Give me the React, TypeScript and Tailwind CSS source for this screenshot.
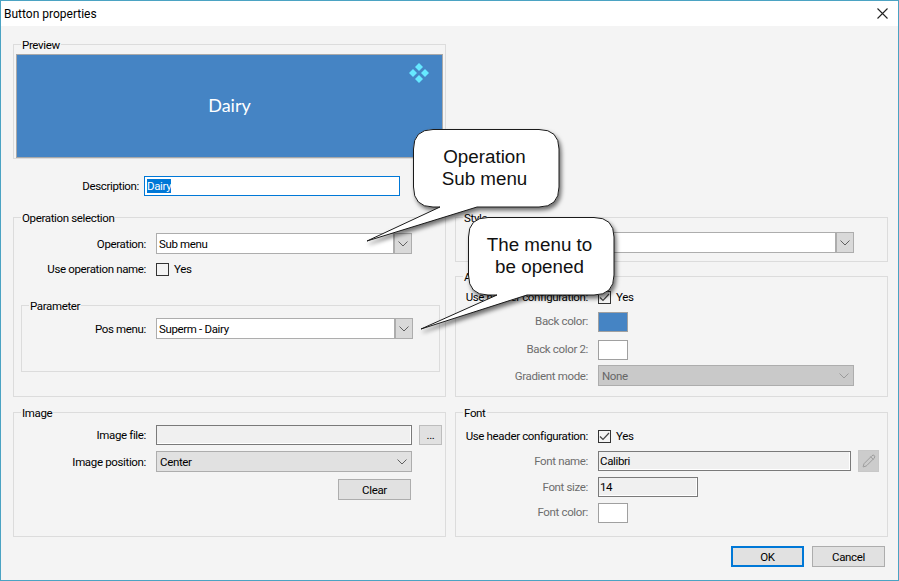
import { ReactNode } from 'react'
import { Pencil } from 'lucide-react'

const uiFont = "font-['Roboto',sans-serif]"

function Chevron({ color = '#606060' }: { color?: string }) {
  return (
    <svg width="10" height="6" viewBox="0 0 10 6" fill="none">
      <path d="M0.5 0.5 L5 5 L9.5 0.5" stroke={color} strokeWidth="1" />
    </svg>
  )
}

function Group({ title, className, children }: { title: string; className: string; children?: ReactNode }) {
  return (
    <div className={`relative border border-[#dcdcdc] ${className}`}>
      <span className="absolute left-[7px] top-[-7px] bg-[#f4f4f4] px-[1px] leading-[14px]">{title}</span>
      {children}
    </div>
  )
}

function Row({ label, labelWidth, muted, raised, className, children }: { label: string; labelWidth: string; muted?: boolean; raised?: boolean; className: string; children: ReactNode }) {
  return (
    <div className={`flex items-center ${className}`}>
      <span className={`${labelWidth} shrink-0 whitespace-nowrap text-right leading-[14px] ${muted ? 'text-[#6d6d6d]' : ''} ${raised ? 'mb-[3px]' : ''}`}>{label}</span>
      {children}
    </div>
  )
}

function Combo({ value, className }: { value: string; className: string }) {
  return (
    <div className={`flex h-[21px] items-center border border-[#adadad] bg-white pl-[2px] ${className}`}>
      <span className="flex-1 leading-[14px]">{value}</span>
      <span className="flex h-full w-[18px] items-center justify-center border-l-2 border-[#adadad] bg-[#d9d9d9]">
        <Chevron />
      </span>
    </div>
  )
}

function FlatCombo({ value, disabled, className }: { value: string; disabled?: boolean; className: string }) {
  return (
    <div className={`flex h-[21px] items-center justify-between border border-[#adadad] pl-[3px] pr-[4px] ${disabled ? 'bg-[#c9c9c9] text-[#666666]' : 'bg-[#e1e1e1]'} ${className}`}>
      <span className="leading-[14px]">{value}</span>
      <Chevron color={disabled ? '#9a9a9a' : '#606060'} />
    </div>
  )
}

function Check({ checked, label }: { checked: boolean; label: string }) {
  return (
    <div className="flex items-center">
      <span className="flex h-[13px] w-[13px] items-center justify-center border border-[#333333] bg-[#f4f4f4]">
        {checked && (
          <svg width="11" height="9" viewBox="0 0 11 9" fill="none">
            <path d="M1 4.5 L4 7.5 L10 1" stroke="#444444" strokeWidth="1.2" />
          </svg>
        )}
      </span>
      <span className="ml-[5px] leading-[14px]">{label}</span>
    </div>
  )
}

function Swatch({ color }: { color: string }) {
  return <span className={`block h-[20px] w-[30px] border border-[#a0a0a0] ${color}`} />
}

function ReadonlyInput({ value, className }: { value?: string; className: string }) {
  return (
    <div className={`flex h-[20px] items-center border border-[#7a7a7a] bg-[#f0f0f0] pl-[1px] shadow-[inset_0_-1px_0_#ffffff,inset_-1px_0_0_#ffffff] ${className}`}>
      <span className="leading-[14px]">{value}</span>
    </div>
  )
}

function Btn({ label, className }: { label: string; className: string }) {
  return <div className={`flex items-center justify-center border-2 bg-[#e1e1e1] leading-[14px] ${className}`}>{label}</div>
}

function Callout({ box, path, lines, text }: { box: string; path: string; lines: string[]; text: string }) {
  return (
    <div className={`absolute tracking-normal ${box}`}>
      <svg width="240" height="130" viewBox="0 0 240 130" className="absolute left-0 top-0 overflow-visible">
        <path d={path} fill="#ffffff" stroke="#1a1a1a" strokeWidth="1" style={{ filter: 'drop-shadow(2px 3px 2px rgba(0,0,0,0.55))' }} />
      </svg>
      <div className={`absolute ${text} font-['Liberation_Sans',sans-serif] text-[18.8px] leading-[22px] text-center text-[#111111]`}>
        {lines.map((l) => (
          <div key={l}>{l}</div>
        ))}
      </div>
    </div>
  )
}

export default function App() {
  return (
    <div className={`relative flex h-[581px] w-[899px] flex-col overflow-hidden border border-[#4ba3c3] bg-[#f4f4f4] text-[11.5px] tracking-[-0.35px] text-black ${uiFont}`}>
      {/* Title bar */}
      <div className="flex h-[25px] shrink-0 items-center justify-between bg-white pl-[3px] pr-[10px]">
        <span className="text-[12px] leading-[14px] tracking-normal">Button properties</span>
        <svg width="11" height="11" viewBox="0 0 11 11" fill="none">
          <path d="M0.5 0.5 L10.5 10.5 M10.5 0.5 L0.5 10.5" stroke="#222222" strokeWidth="1.1" />
        </svg>
      </div>

      <div className="flex gap-x-[9px] pl-[12px]">
        {/* Left column */}
        <div className="flex w-[433px] flex-col">
          <Group title="Preview" className="mt-[18px] h-[115px] px-[2px] pt-[9px]">
            <div className="relative flex h-[104px] items-center justify-center border border-[#a9a9a9] bg-[#4584c4] pb-[2px] font-['Lato',sans-serif] text-[18px] tracking-normal text-white">
              Dairy
              <svg width="20" height="20" viewBox="0 0 20 20" className="absolute right-[13px] top-[8px]" fill="#66e8ff">
                <path d="M10 0 L14 4 L10 8 L6 4 Z" />
                <path d="M4 6 L8 10 L4 14 L0 10 Z" />
                <path d="M16 6 L20 10 L16 14 L12 10 Z" />
                <path d="M10 12 L14 16 L10 20 L6 16 Z" />
              </svg>
            </div>
          </Group>

          <Row label="Description:" labelWidth="w-[126px]" className="mt-[17px] h-[20px]">
            <div className="ml-[5px] flex h-[20px] w-[256px] items-center border border-[#0078d7] bg-white pl-[2px]">
              <span className="bg-[#0078d7] leading-[14px] text-white">Dairy</span>
            </div>
          </Row>

          <Group title="Operation selection" className="mt-[21px] h-[180px] pt-[15px]">
            <Row label="Operation:" labelWidth="w-[132px]" className="">
              <Combo value="Sub menu" className="ml-[10px] w-[256px]" />
            </Row>
            <Row label="Use operation name:" labelWidth="w-[132px]" className="mt-[8px]">
              <div className="ml-[10px]">
                <Check checked={false} label="Yes" />
              </div>
            </Row>
            <Group title="Parameter" className="ml-[7px] mt-[29px] h-[67px] w-[419px] pt-[12px]">
              <Row label="Pos menu:" labelWidth="w-[124px]" className="">
                <Combo value="Superm - Dairy" className="ml-[10px] w-[257px]" />
              </Row>
            </Group>
          </Group>

          <Group title="Image" className="mt-[15px] h-[125px] pt-[12px]">
            <Row label="Image file:" labelWidth="w-[132px]" className="">
              <ReadonlyInput className="ml-[10px] w-[256px]" />
              <Btn label="..." className="ml-[7px] h-[20px] w-[23px] border-[#bdbdbd] !border" />
            </Row>
            <Row label="Image position:" labelWidth="w-[132px]" className="mt-[6px]">
              <FlatCombo value="Center" className="ml-[10px] w-[256px]" />
            </Row>
            <div className="mt-[7px] flex justify-end pr-[34px]">
              <Btn label="Clear" className="h-[21px] w-[73px] !border border-[#adadad]" />
            </div>
          </Group>
        </div>

        {/* Right column */}
        <div className="flex w-[433px] flex-col">
          <Group title="Style" className="mt-[191px] h-[45px] pt-[14px]">
            <div className="pl-[142px]">
              <Combo value="" className="w-[256px]" />
            </div>
          </Group>

          <Group title="Appearance" className="mt-[14px] h-[121px] pt-[13px]">
            <Row label="Use header configuration:" labelWidth="w-[132px]" className="">
              <div className="ml-[10px]">
                <Check checked label="Yes" />
              </div>
            </Row>
            <Row label="Back color:" labelWidth="w-[132px]" muted raised className="mt-[8px]">
              <span className="ml-[10px]">
                <Swatch color="bg-[#4584c4]" />
              </span>
            </Row>
            <Row label="Back color 2:" labelWidth="w-[132px]" muted raised className="mt-[8px]">
              <span className="ml-[10px]">
                <Swatch color="bg-white" />
              </span>
            </Row>
            <Row label="Gradient mode:" labelWidth="w-[132px]" muted className="mt-[5px]">
              <FlatCombo value="None" disabled className="ml-[10px] w-[256px]" />
            </Row>
          </Group>

          <Group title="Font" className="mt-[15px] h-[125px] pt-[16px]">
            <Row label="Use header configuration:" labelWidth="w-[132px]" className="">
              <div className="ml-[10px]">
                <Check checked label="Yes" />
              </div>
            </Row>
            <Row label="Font name:" labelWidth="w-[132px]" muted className="mt-[7px]">
              <ReadonlyInput value="Calibri" className="ml-[10px] w-[253px]" />
              <div className="ml-[7px] flex h-[22px] w-[21px] items-center justify-center border border-[#c8c8c8] bg-[#cccccc]">
                <Pencil size={14} strokeWidth={1.25} color="#8a8a8a" />
              </div>
            </Row>
            <Row label="Font size:" labelWidth="w-[132px]" muted className="mt-[5px]">
              <ReadonlyInput value="14" className="ml-[10px] w-[100px]" />
            </Row>
            <Row label="Font color:" labelWidth="w-[132px]" muted raised className="mt-[6px]">
              <span className="ml-[10px]">
                <Swatch color="bg-white" />
              </span>
            </Row>
          </Group>
        </div>
      </div>

      {/* Footer buttons */}
      <div className="mt-[9px] flex justify-end gap-x-[8px] pr-[13px]">
        <Btn label="OK" className="h-[21px] w-[73px] border-[#0078d7]" />
        <Btn label="Cancel" className="h-[21px] w-[73px] !border border-[#adadad]" />
      </div>

      {/* Callouts */}
      <Callout
        box="left-[412px] top-[128px] h-[130px] w-[240px]"
        path="M20 0.5 H126 Q146 0.5 146 20 V58 Q146 78 126 78 H64 L-46 112 L27 78 H20 Q0.5 78 0.5 58 V20 Q0.5 0.5 20 0.5 Z"
        lines={['Operation', 'Sub menu']}
        text="left-0 top-[17px] w-[143px]"
      />
      <Callout
        box="left-[467px] top-[216px] h-[130px] w-[240px]"
        path="M20 0.5 H126 Q146 0.5 146 20 V58 Q146 78 126 78 H59 L-47 112 L29 78 H20 Q0.5 78 0.5 58 V20 Q0.5 0.5 20 0.5 Z"
        lines={['The menu to', 'be opened']}
        text="left-0 top-[17px] w-[143px]"
      />
    </div>
  )
}
